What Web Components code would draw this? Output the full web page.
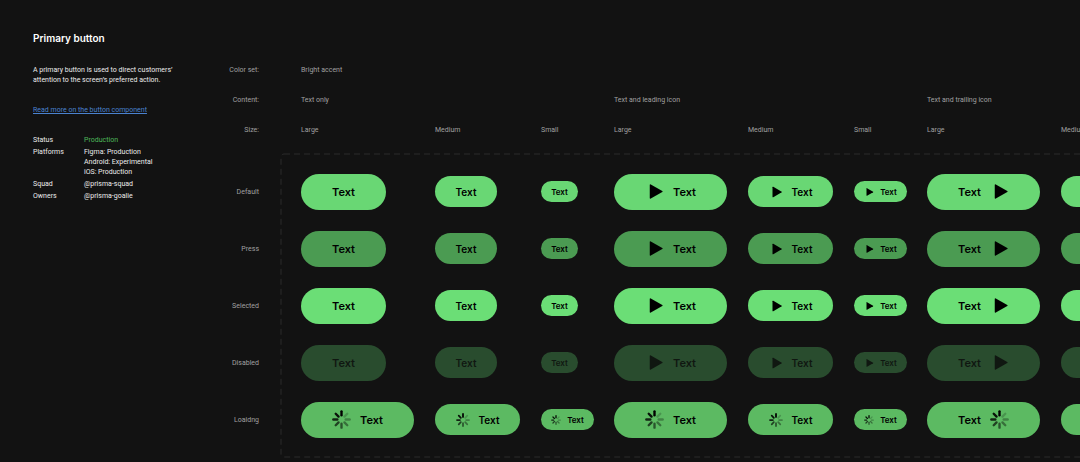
<!DOCTYPE html>
<html lang="en">
<head>
<meta charset="utf-8">
<meta name="viewport" content="width=device-width, initial-scale=1">
<title>Primary button</title>
<style>
  body { margin: 0; background: #121212; color: #ececec; font-family: Roboto, "Liberation Sans", sans-serif; }
</style>
</head>
<body>
<spec-page>
  <component-info slot="info"></component-info>
  <variant-matrix slot="matrix"></variant-matrix>
</spec-page>

<script>
class SpecPage extends HTMLElement {
  constructor() {
    super();
    this.attachShadow({ mode: 'open' }).innerHTML = `
      <style>
        :host { display: block; }
        main { display: grid; grid-template-columns: 180px minmax(0, 1fr); padding-left: 33px; }
      </style>
      <main><slot name="info"></slot><slot name="matrix"></slot></main>`;
  }
}

class ComponentInfo extends HTMLElement {
  constructor() {
    super();
    this.attachShadow({ mode: 'open' }).innerHTML = `
      <style>
        :host { display: block; padding-top: 31px; font-size: 7px; line-height: 10px; white-space: nowrap; }
        h1 { margin: 0 0 20px; font: 600 10px/14px Inter, "Liberation Sans", sans-serif; color: #fff; }
        p { margin: 0 0 20px; }
        a { color: #4a82cf; }
        dl { display: grid; grid-template-columns: 51px 1fr; row-gap: 2px; margin: 0; }
        dd { margin: 0; }
        .ok { color: #4db95a; }
      </style>
      <h1>Primary button</h1>
      <p>A primary button is used to direct customers’<br>attention to the screen’s preferred action.</p>
      <p><a href="#button">Read more on the button component</a></p>
      <dl>
        <dt>Status</dt><dd class="ok">Production</dd>
        <dt>Platforms</dt><dd>Figma: Production<br>Android: Experimental<br>iOS: Production</dd>
        <dt>Squad</dt><dd>@prisma-squad</dd>
        <dt>Owners</dt><dd>@prisma-goalie</dd>
      </dl>`;
  }
}

class PlayIcon extends HTMLElement {
  constructor() {
    super();
    this.attachShadow({ mode: 'open' }).innerHTML = `
      <style>:host { display: block; } svg { display: block; width: 100%; height: 100%; }</style>
      <svg viewBox="0 0 20 20" fill="currentColor" aria-hidden="true"><path d="M5 3.2Q5 2 6.1 2.6L18.2 9.5Q19 10 18.2 10.5L6.1 17.4Q5 18 5 16.8Z"/></svg>`;
  }
}

class LoadingIcon extends HTMLElement {
  constructor() {
    super();
    const fades = [1, .2, .3, .4, .55, .65, .8, .9];
    const spokes = fades.map((o, i) =>
      `<path d="M10 1.4V5.6" opacity="${o}" transform="rotate(${i * 45} 10 10)"/>`).join('');
    this.attachShadow({ mode: 'open' }).innerHTML = `
      <style>:host { display: block; } svg { display: block; width: 100%; height: 100%; }</style>
      <svg viewBox="0 0 20 20" fill="none" stroke="currentColor" stroke-width="2.5" stroke-linecap="round" aria-hidden="true">${spokes}</svg>`;
  }
}

class PrimaryButton extends HTMLElement {
  connectedCallback() {
    if (this.shadowRoot) return;
    const state = this.getAttribute('state');
    const icon = state === 'loading' ? '<loading-icon></loading-icon>'
      : this.getAttribute('icon') === 'none' ? '' : '<play-icon></play-icon>';
    this.attachShadow({ mode: 'open' }).innerHTML = `
      <style>
        :host { display: block; --bg: #69d774; --fg: #000; }
        :host([state="press"]) { --bg: #4b9b52; }
        :host([state="selected"]) { --bg: #6bde76; }
        :host([state="disabled"]) { --bg: #294c2e; --fg: #101711; }
        :host([state="loading"]) { --bg: #5cba62; }
        button { display: flex; align-items: center; justify-content: center; box-sizing: border-box; margin: 0; padding: 0; border: 0;
          border-radius: 18px; background: var(--bg); color: var(--fg); font-family: Inter, "Liberation Sans", sans-serif; font-weight: 600; line-height: 14px; }
        .large { min-width: 85px; height: 36px; gap: 9px; font-size: 11px; --icon: 19px; }
        .medium { min-width: 62px; height: 31px; gap: 9px; font-size: 10px; --icon: 14px; }
        .small { min-width: 37px; height: 21px; gap: 6px; font-size: 8px; --icon: 10px; }
        .large.wide { min-width: 113px; }
        .medium.wide { min-width: 85px; }
        .small.wide { min-width: 53px; }
        .trailing { flex-direction: row-reverse; }
        play-icon, loading-icon { width: var(--icon); height: var(--icon); }
      </style>
      <button type="button" class="${this.getAttribute('size')} ${icon ? 'wide' : ''} ${this.getAttribute('icon')}"${state === 'disabled' ? ' disabled' : ''}>${icon}<span><slot></slot></span></button>`;
  }
}

class VariantMatrix extends HTMLElement {
  constructor() {
    super();
    const contents = [
      { title: 'Text only', icon: 'none', sizes: ['Large', 'Medium', 'Small'] },
      { title: 'Text and leading icon', icon: 'leading', sizes: ['Large', 'Medium', 'Small'] },
      { title: 'Text and trailing icon', icon: 'trailing', sizes: ['Large', 'Medium'] }
    ];
    const states = [['Default', 'default'], ['Press', 'press'], ['Selected', 'selected'], ['Disabled', 'disabled'], ['Loaidng', 'loading']];
    const each = draw => contents.map(c => c.sizes.map(s => draw(s, c)).join('')).join('');
    const rows = states.map(([label, state]) => `<tr><th scope="row">${label}</th>${
      each((s, c) => `<td><primary-button size="${s.toLowerCase()}" icon="${c.icon}" state="${state}">Text</primary-button></td>`)}</tr>`).join('');
    this.attachShadow({ mode: 'open' }).innerHTML = `
      <style>
        :host { display: block; position: relative; overflow: hidden; padding: 55px 0 14px; font-size: 7px; line-height: 10px; color: #a0a0a0; }
        table { border-collapse: collapse; table-layout: fixed; width: 954px; }
        .label { width: 88px; } .large { width: 134px; } .medium { width: 106px; } .small { width: 73px; }
        th, td { padding: 0; font-weight: 400; text-align: left; vertical-align: middle; white-space: nowrap; }
        th:first-child { text-align: right; padding-right: 42px; }
        thead tr { height: 30px; }
        thead::after { content: ""; display: table-row; height: 18px; }
        tbody tr { height: 57px; }
        .frame { position: absolute; inset: 154px auto 5px 68px; width: 906px; pointer-events: none; }
        .frame svg { display: block; width: 100%; height: 100%; overflow: visible; }
      </style>
      <table>
        <colgroup><col class="label">${each(s => `<col class="${s.toLowerCase()}">`)}</colgroup>
        <thead>
          <tr><th scope="row">Color set:</th><th colspan="8">Bright accent</th></tr>
          <tr><th scope="row">Content:</th>${contents.map(c => `<th colspan="${c.sizes.length}">${c.title}</th>`).join('')}</tr>
          <tr><th scope="row">Size:</th>${each(s => `<th scope="col">${s}</th>`)}</tr>
        </thead>
        <tbody>${rows}</tbody>
      </table>
      <div class="frame"><svg aria-hidden="true"><rect width="100%" height="100%" rx="3" fill="none" stroke="#2a2a2a" stroke-dasharray="6 4"/></svg></div>`;
  }
}

customElements.define('play-icon', PlayIcon);
customElements.define('loading-icon', LoadingIcon);
customElements.define('primary-button', PrimaryButton);
customElements.define('variant-matrix', VariantMatrix);
customElements.define('component-info', ComponentInfo);
customElements.define('spec-page', SpecPage);
</script>
</body>
</html>
